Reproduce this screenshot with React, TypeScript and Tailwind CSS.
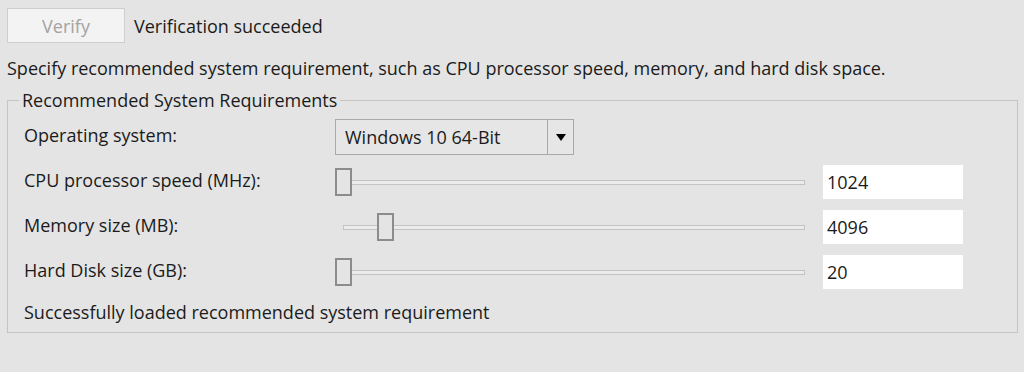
import React from "react";

const font = { fontFamily: '"Open Sans", "Noto Sans", sans-serif' };

function Slider({ offset, pos }: { offset: number; pos: number }) {
  return (
    <div className="relative h-[36px] w-[470px]">
      <div
        className="absolute right-0 top-[16px] h-[5px] border border-[#c3c3c3] bg-[#ebebeb]"
        style={{ left: offset }}
      />
      <div
        className="absolute top-[4px] h-[28px] w-[17px] border-2 border-[#8c8c8c] bg-[#e4e4e4]"
        style={{ left: pos }}
      />
    </div>
  );
}

function ValueBox({ value }: { value: string }) {
  return (
    <div className="flex h-[34px] w-[140px] items-center bg-white pl-[4px] text-[#1b1b1b]">
      {value}
    </div>
  );
}

export default function App() {
  const rows = [
    { label: "CPU processor speed (MHz):", value: "1024", offset: 0, pos: 0 },
    { label: "Memory size (MB):", value: "4096", offset: 8, pos: 42 },
    { label: "Hard Disk size (GB):", value: "20", offset: 0, pos: 0 },
  ];

  return (
    <div
      className="h-[372px] w-[1024px] overflow-hidden bg-[#e4e4e4] px-[7px] pt-[8px] text-[18px] leading-[22px] text-[#1b1b1b]"
      style={font}
    >
      <div className="flex items-center gap-[9px]">
        <button className="h-[35px] w-[118px] border border-[#cfcfcf] bg-[#f3f3f3] text-[#a3a3a3]">
          Verify
        </button>
        <span>Verification succeeded</span>
      </div>

      <p className="mt-[14px]">
        Specify recommended system requirement, such as CPU processor speed, memory, and hard disk space.
      </p>

      <fieldset className="mt-[10px] w-[1011px] border border-[#c4c4c4] px-[16px] pb-[9px] pt-[8px]">
        <legend className="-ml-[5px] px-[3px]">Recommended System Requirements</legend>

        <div className="flex flex-col gap-[9px]">
          <div className="flex h-[36px] items-center">
            <span className="w-[311px] -translate-y-[2px]">Operating system:</span>
            <div className="flex h-[36px] w-[239px] border border-[#a9a9a9] bg-[#e6e6e6]">
              <span className="flex flex-1 items-center pl-[9px]">Windows 10 64-Bit</span>
              <span className="flex w-[26px] items-center justify-center border-l border-[#a9a9a9]">
                <svg width="10" height="7" viewBox="0 0 10 7">
                  <path d="M0 0 H10 L5 7 Z" fill="#000" />
                </svg>
              </span>
            </div>
          </div>

          {rows.map((r) => (
            <div key={r.label} className="flex h-[36px] items-center">
              <span className="w-[311px] -translate-y-[2px]">{r.label}</span>
              <Slider offset={r.offset} pos={r.pos} />
              <div className="ml-[18px]">
                <ValueBox value={r.value} />
              </div>
            </div>
          ))}
        </div>

        <p className="mt-[11px]">Successfully loaded recommended system requirement</p>
      </fieldset>
    </div>
  );
}
